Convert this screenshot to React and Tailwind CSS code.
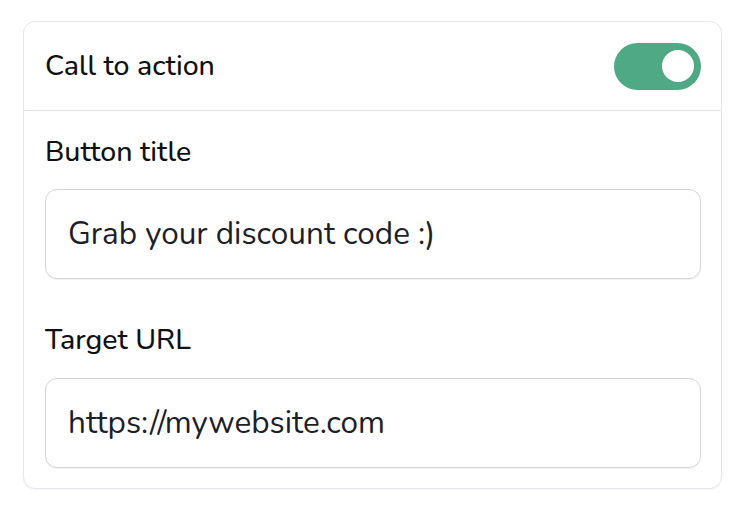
export default function App() {
  return (
    <div className="w-[746px] h-[514px] bg-white pt-[21px] pl-[23px]" style={{ fontFamily: '"Nunito", "Noto Sans", sans-serif' }}>
      <div className="w-[699px] h-[468px] rounded-[12px] border-[1.5px] border-[#e7e5ed] bg-white shadow-[0_1px_2px_rgba(0,0,0,0.04)] flex flex-col">
        <div className="h-[89px] shrink-0 flex items-center justify-between pl-[21px] pr-[20px] border-b-[1.5px] border-[#e7e5ed]">
          <span className="text-[28.5px] font-medium text-[#111]">Call to action</span>
          <div className="w-[87px] h-[47px] rounded-full bg-[#4fa985] flex items-center justify-end pr-[7px]">
            <div className="w-[32px] h-[32px] rounded-full bg-white" />
          </div>
        </div>
        <div className="flex flex-col px-[21px] pt-[24px]">
          <label className="text-[28.5px] leading-[34px] font-medium text-[#111]">Button title</label>
          <div className="mt-[20px] h-[90px] w-[656px] rounded-[12px] border-[1.5px] border-[#d6d4db] shadow-[0_1px_1px_rgba(0,0,0,0.06)] flex items-center pl-[22px] text-[31.5px] text-[#1e1e26]">
            Grab your discount code :)
          </div>
          <label className="mt-[44px] text-[28.5px] leading-[34px] font-medium text-[#111]">Target URL</label>
          <div className="mt-[21px] h-[90px] w-[656px] rounded-[12px] border-[1.5px] border-[#d6d4db] shadow-[0_1px_1px_rgba(0,0,0,0.06)] flex items-center pl-[22px] text-[31.5px] text-[#1e1e26]">
            https://mywebsite.com
          </div>
        </div>
      </div>
    </div>
  );
}
